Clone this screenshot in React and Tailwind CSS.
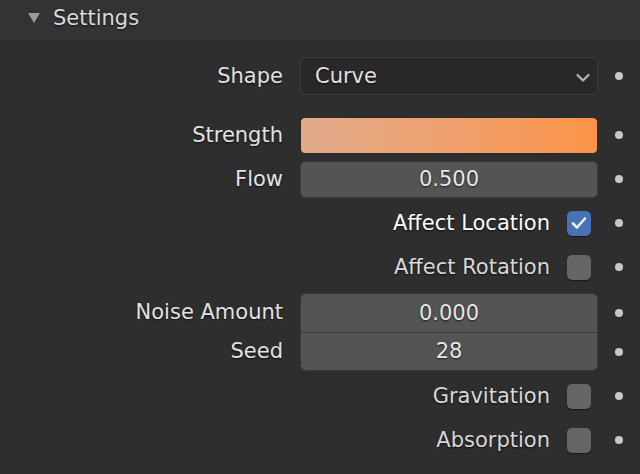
const font = "font-['DejaVu_Sans',sans-serif]";
const shadow = "[text-shadow:0_1px_2px_rgba(0,0,0,0.7)]";

function Dot() {
  return (
    <div className="w-[42px] flex justify-center">
      <div className="w-[8px] h-[8px] rounded-full bg-[#c8c8c8]" />
    </div>
  );
}

function FieldRow({ label, children, h = "h-[44px]", extra = "" }) {
  return (
    <div className={`flex items-center ${h} ${extra}`}>
      <div className={`w-[284px] text-right pr-[1px] text-[#e2e2e2] ${shadow}`}>{label}</div>
      <div className="w-[16px]" />
      <div className="w-[298px]">{children}</div>
      <Dot />
    </div>
  );
}

function CheckRow({ label, checked }) {
  return (
    <div className="flex items-center justify-end h-[44px]">
      <div className={`${checked ? "text-white" : "text-[#d8d8d8]"} ${shadow}`}>{label}</div>
      <div className="w-[17px]" />
      {checked ? (
        <div className="w-[24px] h-[25px] rounded-[5px] bg-[#4772b3] shadow-[0_1px_1px_rgba(0,0,0,0.5)] flex items-center justify-center">
          <svg width="18" height="18" viewBox="0 0 18 18">
            <path d="M3 9.5 L7 13.5 L15 4.5" fill="none" stroke="#e8eef8" strokeWidth="2.6" strokeLinecap="round" strokeLinejoin="round" />
          </svg>
        </div>
      ) : (
        <div className="w-[24px] h-[25px] rounded-[5px] bg-[#656565] shadow-[0_1px_1px_rgba(0,0,0,0.5)]" />
      )}
      <div className="w-[7px]" />
      <Dot />
    </div>
  );
}

export default function App() {
  return (
    <div className={`w-[640px] h-[474px] bg-[#2e2e2e] text-[21px] leading-none ${font}`}>
      <div className="h-[40px] bg-[#333333] flex items-center pb-[4px]">
        <svg className="ml-[28px]" width="12" height="11" viewBox="0 0 12 11">
          <polygon points="0,0 12,0 6,10" fill="#9a9a9a" />
        </svg>
        <span className={`ml-[13px] text-[#dadada] ${shadow}`}>Settings</span>
      </div>
      <div className="pt-[14px]">
        <FieldRow label="Shape">
          <div className="h-[38px] rounded-[6px] bg-[#282828] border border-[#3c3c3c] flex items-center justify-between pl-[14px] pr-[7px]">
            <span className={`text-[#e0e0e0] ${shadow}`}>Curve</span>
            <svg width="14" height="10" viewBox="0 0 14 10" className="mt-[3px]">
              <path d="M1.5 2 L7 7.5 L12.5 2" fill="none" stroke="#b4b4b4" strokeWidth="2.2" strokeLinecap="round" strokeLinejoin="round" />
            </svg>
          </div>
        </FieldRow>
        <FieldRow label="Strength" extra="mt-[15px]">
          <div className="h-[37px] rounded-[5px] border border-[#2a2a2a] bg-gradient-to-r from-[#e1ab8b] to-[#fc9448]" />
        </FieldRow>
        <FieldRow label="Flow">
          <div className={`h-[37px] rounded-[5px] border border-[#3a3a3a] bg-[#545454] flex items-center justify-center text-[#e6e6e6] ${shadow}`}>
            0.500
          </div>
        </FieldRow>
        <CheckRow label="Affect Location" checked />
        <CheckRow label="Affect Rotation" />
        <div className="mt-[4px]">
          <FieldRow label="Noise Amount" h="h-[39px]">
            <div className={`h-[39px] rounded-t-[6px] border border-b-0 border-[#3a3a3a] bg-[#545454] flex items-center justify-center text-[#e6e6e6] ${shadow}`}>
              0.000
            </div>
          </FieldRow>
          <FieldRow label="Seed" h="h-[39px]">
            <div className={`h-[39px] rounded-b-[6px] border border-[#3a3a3a] bg-[#545454] flex items-center justify-center text-[#e6e6e6] ${shadow}`}>
              28
            </div>
          </FieldRow>
        </div>
        <div className="mt-[3px]">
          <CheckRow label="Gravitation" />
          <CheckRow label="Absorption" />
        </div>
      </div>
    </div>
  );
}
